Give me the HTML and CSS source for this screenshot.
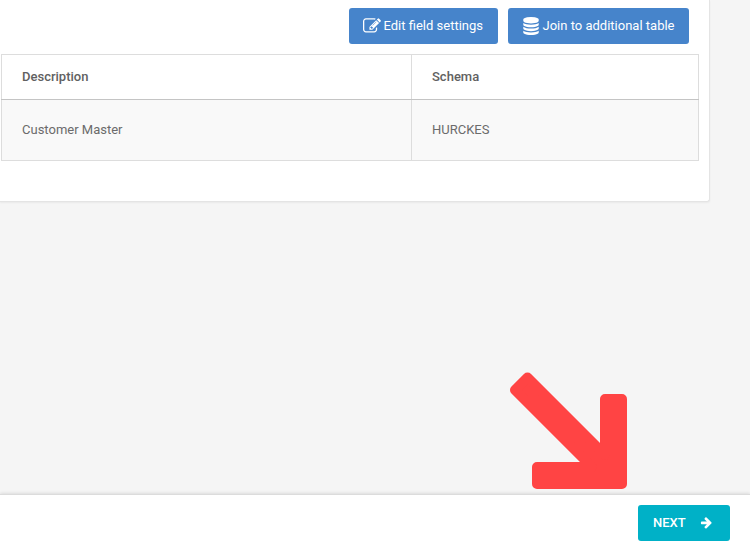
FILE: index.html
```html
<!DOCTYPE html>
<html lang="en">
<head>
<meta charset="utf-8">
<title>Table details</title>
<link rel="stylesheet" href="styles.css">
</head>
<body>
<div class="page">
  <main class="content">
    <section class="card">
      <div class="actions">
        <button class="btn btn-blue" type="button">
          <svg class="icon" viewBox="0 0 1792 1792"><path d="M888 1184l116-116-152-152-116 116v56h96v96h56zm440-720q-16-16-33 1l-350 350q-17 17-1 33t33-1l350-350q17-17 1-33zm80 594v190q0 119-84.5 203.5t-203.5 84.5h-832q-119 0-203.5-84.5t-84.5-203.5v-832q0-119 84.5-203.5t203.5-84.5h832q63 0 117 25 15 7 18 23 3 17-9 29l-49 49q-14 14-32 8-23-6-45-6h-832q-66 0-113 47t-47 113v832q0 66 47 113t113 47h832q66 0 113-47t47-113v-126q0-13 9-22l64-64q15-15 35-7t20 29zm-96-738l288 288-672 672h-288v-288zm444 132l-92 92-288-288 92-92q28-28 68-28t68 28l152 152q28 28 28 68t-28 68z"/></svg>
          Edit field settings
        </button>
        <button class="btn btn-blue" type="button">
          <svg class="icon" viewBox="0 0 1792 1792"><path d="M896 768q237 0 443-43t325-127v170q0 69-103 128t-280 93.5-385 34.5-385-34.5-280-93.5-103-128v-170q119 84 325 127t443 43zm0 768q237 0 443-43t325-127v170q0 69-103 128t-280 93.5-385 34.5-385-34.5-280-93.5-103-128v-170q119 84 325 127t443 43zm0-384q237 0 443-43t325-127v170q0 69-103 128t-280 93.5-385 34.5-385-34.5-280-93.5-103-128v-170q119 84 325 127t443 43zm0-1152q208 0 385 34.5t280 93.5 103 128v128q0 69-103 128t-280 93.5-385 34.5-385-34.5-280-93.5-103-128v-128q0-69 103-128t280-93.5 385-34.5z"/></svg>
          Join to additional table
        </button>
      </div>
      <table class="data">
        <thead>
          <tr><th class="col-desc">Description</th><th>Schema</th></tr>
        </thead>
        <tbody>
          <tr><td>Customer Master</td><td>HURCKES</td></tr>
        </tbody>
      </table>
    </section>
  </main>
  <footer class="footer">
    <button class="btn btn-next" type="button">
      NEXT
      <svg class="icon-next" viewBox="0 0 1792 1792"><path d="M1600 960q0 54-37 91l-651 651q-39 37-91 37-51 0-90-37l-75-75q-38-38-38-91t38-91l293-293h-704q-52 0-84.5-37.5t-32.5-90.5v-128q0-53 32.5-90.5t84.5-37.5h704l-293-294q-38-36-38-90t38-90l75-75q38-38 90-38 53 0 91 38l651 651q37 35 37 90z"/></svg>
    </button>
  </footer>
  <svg class="callout" viewBox="0 0 130 130">
    <polygon points="22.5,8.5 10,21 87,98 32,98 32,115 117,115 117,30 100,30 100,86"/>
  </svg>
</div>
</body>
</html>
```
FILE: styles.css
```css
* { box-sizing: border-box; }
html, body { margin: 0; padding: 0; height: 100%; overflow: hidden; }
body {
  background: #f5f5f5;
  font-family: Roboto, "Liberation Sans", sans-serif;
  color: #666;
}
.page {
  position: relative;
  width: 750px;
  height: 550px;
  display: flex;
  flex-direction: column;
}
.content { flex: 1; }
.card {
  width: 710px;
  height: 202px;
  padding: 8px 10px 0 1px;
  background: #fff;
  border-radius: 0 0 3px 0;
  border-right: 1px solid #e4e4e4;
  border-bottom: 1px solid #e4e4e4;
  box-shadow: 0 1px 2px rgba(0,0,0,.05);
}
.actions {
  display: flex;
  justify-content: flex-end;
  gap: 10px;
  padding-right: 10px;
  margin-bottom: 10px;
}
.btn {
  display: inline-flex;
  align-items: center;
  height: 36px;
  border: 0;
  border-radius: 3px;
  color: #fff;
  font-family: inherit;
  font-size: 13px;
  cursor: pointer;
}
.btn-blue {
  padding: 0 14.5px 1px 14px;
  gap: 3px;
  background: #4684cb;
}
.icon { width: 18px; height: 18px; fill: #fff; }
.data {
  width: 698px;
  border-collapse: collapse;
  table-layout: fixed;
  font-size: 13px;
}
.data th, .data td {
  padding: 0 20px;
  text-align: left;
  border: 1px solid #ddd;
}
.data th {
  height: 45px;
  padding-bottom: 2px;
  font-weight: 500;
  border-bottom: 1px solid #c4c4c4;
  color: #616161;
}
.col-desc { width: 410px; }
.data td {
  height: 61px;
  padding-bottom: 2px;
  background: #f9f9f9;
  color: #6b6b6b;
}
.footer {
  flex: none;
  height: 56px;
  display: flex;
  justify-content: flex-end;
  padding: 10px 20px 0 0;
  background: #fff;
  border-top: 1px solid #dcdcdc;
  box-shadow: 0 -1px 3px rgba(0,0,0,.1);
}
.btn-next {
  width: 92px;
  padding: 0 17px 2px 15px;
  justify-content: space-between;
  background: #00b1c7;
  font-weight: 500;
}
.icon-next { width: 13px; height: 13px; fill: #fff; margin-top: 1px; }
.callout {
  position: absolute;
  left: 505px;
  top: 369px;
  width: 130px;
  height: 130px;
  fill: #ff4444;
  stroke: #ff4444;
  stroke-width: 10px;
  stroke-linejoin: round;
}
```
